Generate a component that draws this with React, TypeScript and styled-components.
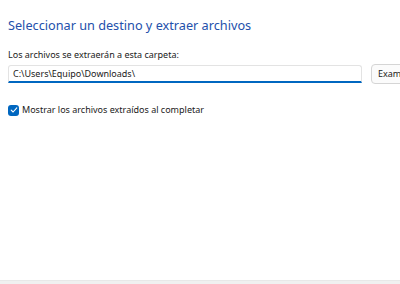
import React from "react";
import styled, { createGlobalStyle } from "styled-components";

const Global = createGlobalStyle`
  html, body { margin: 0; padding: 0; background: #ffffff; }
  body { width: 400px; height: 284px; overflow: hidden; }
`;

const Page = styled.div`
  width: 400px;
  height: 284px;
  display: flex;
  flex-direction: column;
  font-family: "Noto Sans", "Open Sans", sans-serif;
  color: #1a1a1a;
  overflow: hidden;
`;

const Content = styled.div`
  flex: 1;
  padding: 15px 0 0 8px;
  display: flex;
  flex-direction: column;
`;

const Title = styled.h1`
  margin: 0;
  font-size: 12.7px;
  font-weight: 400;
  line-height: 20px;
  color: #2350ab;
  white-space: nowrap;
`;

const Label = styled.div`
  margin-top: 14px;
  font-size: 9px;
  line-height: 12px;
  white-space: nowrap;
`;

const PathRow = styled.div`
  margin-top: 3px;
  display: flex;
  align-items: center;
  gap: 9px;
`;

const PathInput = styled.div`
  box-sizing: border-box;
  width: 354px;
  height: 18px;
  border: 1px solid #e3e3e3;
  border-bottom: 2px solid #0067c0;
  border-radius: 3px 3px 0 0;
  padding: 0 0 0 4px;
  font-size: 9px;
  line-height: 15px;
  white-space: nowrap;
  flex-shrink: 0;
`;

const Button = styled.div`
  box-sizing: border-box;
  height: 20px;
  padding: 0 6px;
  border: 1px solid #d5d5d5;
  border-radius: 4px;
  background: #fbfbfb;
  font-size: 9px;
  line-height: 18px;
  white-space: nowrap;
  flex-shrink: 0;
`;

const CheckRow = styled.label`
  margin-top: 20px;
  display: flex;
  align-items: center;
  gap: 3px;
  font-size: 9px;
  line-height: 12px;
  white-space: nowrap;
`;

const Box = styled.span`
  width: 11px;
  height: 11px;
  border-radius: 3px;
  background: #0067c0;
  display: flex;
  align-items: center;
  justify-content: center;
  flex-shrink: 0;
`;

const Footer = styled.div`
  height: 3px;
  background: #f0f0f0;
  border-top: 1px solid #e8e8e8;
`;

export default function App() {
  return (
    <Page>
      <Global />
      <Content>
        <Title>Seleccionar un destino y extraer archivos</Title>
        <Label>Los archivos se extraerán a esta carpeta:</Label>
        <PathRow>
          <PathInput>C:\Users\Equipo\Downloads\</PathInput>
          <Button>Examinar...</Button>
        </PathRow>
        <CheckRow>
          <Box>
            <svg width="8" height="8" viewBox="0 0 8 8">
              <path d="M1.2 4.2 L3.1 6 L6.8 1.8" fill="none" stroke="#fff" strokeWidth="1.1" strokeLinecap="round" strokeLinejoin="round" />
            </svg>
          </Box>
          Mostrar los archivos extraídos al completar
        </CheckRow>
      </Content>
      <Footer />
    </Page>
  );
}
